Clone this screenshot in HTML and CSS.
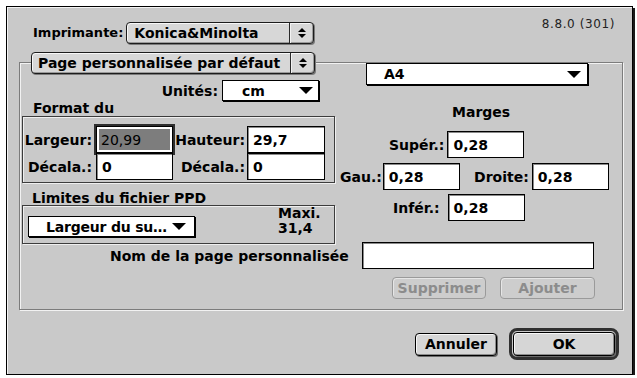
FILE: index.html
```html
<!DOCTYPE html>
<html lang="fr">
<head>
<meta charset="utf-8">
<title>Format d'impression</title>
<link rel="stylesheet" href="styles.css">
</head>
<body>
<div class="window">
  <div class="header">
    <div class="printer">
      <span class="printer-label">Imprimante:</span>
      <div class="popup popup-printer">
        <span class="popup-text">Konica&amp;Minolta</span>
        <span class="popup-arrows"><i class="up"></i><i class="down"></i></span>
      </div>
    </div>
    <div class="version">8.8.0 (301)</div>
  </div>

  <div class="group">
    <div class="group-grid">
      <div class="col-left">
        <div class="popup popup-title">
          <span class="popup-text">Page personnalisée par défaut</span>
          <span class="popup-arrows"><i class="up"></i><i class="down"></i></span>
        </div>
        <div class="units-row">
          <span class="lbl">Unités:</span>
          <div class="menu menu-units"><span class="menu-text">cm</span><i class="tri"></i></div>
        </div>
        <div class="section-label format-label">Format du</div>
        <div class="box format-box">
          <div class="dims">
            <span class="dlbl">Largeur:</span>
            <div class="field focus"><span class="sel">20,99</span></div>
            <span class="dlbl dlbl2">Hauteur:</span>
            <div class="field">29,7</div>
            <span class="dlbl">Décala.:</span>
            <div class="field">0</div>
            <span class="dlbl dlbl2">Décala.:</span>
            <div class="field">0</div>
          </div>
        </div>
        <div class="section-label limits-label">Limites du fichier PPD</div>
        <div class="box limits-box">
          <div class="menu menu-limit"><span class="menu-text">Largeur du su…</span><i class="tri"></i></div>
          <div class="maxi">Maxi.<br>31,4</div>
        </div>
      </div>

      <div class="col-right">
        <div class="menu menu-a4"><span class="menu-text">A4</span><i class="tri"></i></div>
        <div class="marges">Marges</div>
        <div class="mrow mrow-top">
          <span class="lbl">Supér.:</span>
          <div class="field">0,28</div>
        </div>
        <div class="mrow mrow-mid">
          <span class="lbl">Gau.:</span>
          <div class="field">0,28</div>
          <span class="lbl lbl-droite">Droite:</span>
          <div class="field">0,28</div>
        </div>
        <div class="mrow mrow-bot">
          <span class="lbl">Infér.:</span>
          <div class="field">0,28</div>
        </div>
      </div>
    </div>

    <div class="name-row">
      <span class="lbl">Nom de la page personnalisée</span>
      <div class="field field-name"></div>
    </div>
    <div class="btn-row">
      <div class="btn-disabled btn-supp">Supprimer</div>
      <div class="btn-disabled btn-add">Ajouter</div>
    </div>
  </div>

  <div class="footer">
    <div class="btn btn-cancel">Annuler</div>
    <div class="default-ring"><div class="btn btn-ok">OK</div></div>
  </div>
</div>
</body>
</html>
```

FILE: styles.css
```css
* { box-sizing: border-box; }

html, body {
  margin: 0;
  padding: 0;
  background: #ffffff;
}

body {
  font-family: "DejaVu Sans", "Verdana", sans-serif;
  font-weight: bold;
  font-size: 14px;
  line-height: 16px;
  color: #000;
}

.window {
  box-sizing: content-box;
  margin: 6px 0 0 6px;
  width: 625px;
  height: 367px;
  border: 1px solid #000;
  background: #c9c9c9;
  box-shadow: inset 1px 1px 0 #f4f4f4, 2px 2px 0 #1a1a1a;
  display: flex;
  flex-direction: column;
}

/* header */
.header {
  height: 38px;
  display: flex;
  justify-content: space-between;
  align-items: flex-start;
  padding: 0 17px 0 26px;
}

.printer {
  margin-top: 15px;
  display: flex;
  align-items: center;
  gap: 3px;
}

.printer-label {
  font-size: 13px;
}

.version {
  margin-top: 10px;
  font-weight: normal;
  font-size: 12px;
  line-height: 14px;
  letter-spacing: 0.6px;
  color: #222;
}

/* platinum popup */
.popup {
  height: 22px;
  display: flex;
  align-items: stretch;
  border: 1px solid #1c1c1c;
  border-radius: 4px;
  background: #d7d7d7;
  box-shadow: inset 1px 1px 0 #f7f7f7, inset -1px -1px 0 #9a9a9a, 1px 1px 0 #7a7a7a;
}

.popup-text {
  flex: 1;
  display: flex;
  align-items: center;
  padding-left: 7px;
  white-space: nowrap;
}

.popup-arrows {
  width: 24px;
  border-left: 1px solid #2a2a2a;
  box-shadow: inset 1px 0 0 #f2f2f2;
  display: flex;
  flex-direction: column;
  align-items: center;
  justify-content: center;
  gap: 2px;
}

.popup-arrows .up {
  width: 0;
  height: 0;
  border-left: 4px solid transparent;
  border-right: 4px solid transparent;
  border-bottom: 4px solid #000;
}

.popup-arrows .down {
  width: 0;
  height: 0;
  border-left: 4px solid transparent;
  border-right: 4px solid transparent;
  border-top: 4px solid #000;
}

.popup-printer { width: 188px; }
.popup-printer .popup-text { padding-left: 7px; }

/* group */
.group {
  margin: 17px 0 0 12px;
  width: 604px;
  height: 248px;
  border: 1px solid #7c7c7c;
  box-shadow: inset 1px 1px 0 #f2f2f2, 1px 1px 0 #f2f2f2;
}

.group-grid {
  display: grid;
  grid-template-columns: 316px 1fr;
}

.col-left, .col-right {
  display: flex;
  flex-direction: column;
  align-items: flex-start;
}

.popup-title {
  margin: -11px 0 0 11px;
  width: 284px;
}
.popup-title .popup-text { padding-left: 6px; }

/* white menus */
.menu {
  height: 21px;
  display: flex;
  align-items: center;
  justify-content: space-between;
  border: 1px solid #000;
  background: #fff;
  box-shadow: 1px 1px 0 #000;
}

.menu-text { white-space: nowrap; }

.tri {
  width: 0;
  height: 0;
  border-left: 7px solid transparent;
  border-right: 7px solid transparent;
  border-top: 7px solid #000;
}

.units-row {
  align-self: stretch;
  margin-top: 6px;
  display: flex;
  justify-content: flex-end;
  align-items: center;
  gap: 4px;
  padding-right: 17px;
}

.menu-units {
  width: 97px;
  padding: 0 5px 0 19px;
}

.section-label { line-height: 16px; }

.format-label { margin: -1px 0 0 13px; }

.box {
  margin-left: 2px;
  width: 313px;
  border: 1px solid #3c3c3c;
  box-shadow: inset 1px 1px 0 #efefef, 1px 1px 0 #efefef;
}

.format-box {
  height: 67px;
  padding-top: 9px;
}

.dims {
  display: grid;
  grid-template-columns: 73px 77px 74px 78px;
  grid-auto-rows: 27px;
}

.dlbl {
  align-self: center;
  text-align: right;
  padding-right: 4px;
  white-space: nowrap;
}

.dlbl2 { padding-right: 2px; }

/* edit fields */
.field {
  height: 27px;
  width: 77px;
  border: 1px solid #000;
  background: #fff;
  box-shadow: inset 1px 1px 0 #8a8a8a;
  display: flex;
  align-items: center;
  padding-left: 5px;
  white-space: nowrap;
}

.dims .field { width: auto; }

.field.focus {
  padding: 2px;
  box-shadow: 0 0 0 2px #2e2e2e;
  align-items: stretch;
}

.sel {
  flex: 1;
  background: #7d7d7d;
  display: flex;
  align-items: center;
  padding-left: 2px;
  font-weight: normal;
  color: #000;
}

.limits-label { margin: 7px 0 0 12px; }

.limits-box {
  margin-top: -1px;
  height: 39px;
  display: flex;
  align-items: flex-start;
  padding-left: 5px;
}

.menu-limit {
  margin-top: 10px;
  width: 167px;
  padding: 0 8px 0 17px;
}

.menu-limit .menu-text { letter-spacing: -0.2px; }

.maxi {
  margin-left: 83px;
  line-height: 15px;
}

/* right column */
.menu-a4 {
  margin-left: 30px;
  width: 222px;
  height: 22px;
  padding: 0 6px 0 17px;
}

.marges { margin: 19px 0 0 116px; }

.mrow {
  display: flex;
  align-items: center;
}

.mrow .lbl { white-space: nowrap; }

.mrow-top { margin-top: 11px; padding-left: 53px; gap: 3px; }
.mrow-mid { margin-top: 5px; padding-left: 4px; gap: 1px; }
.mrow-mid .lbl-droite { width: 68px; text-align: right; margin-right: 2px; }
.mrow-bot { margin-top: 4px; padding-left: 57px; gap: 8px; }

/* name row */
.name-row {
  margin-top: -2px;
  display: flex;
  align-items: center;
  padding-left: 90px;
  gap: 13px;
}

.field-name { width: 232px; }

.btn-row {
  margin-top: 8px;
  padding-left: 372px;
  display: flex;
  gap: 14px;
}

.btn-disabled {
  height: 22px;
  border: 1px solid #9a9a9a;
  border-radius: 4px;
  background: #cdcdcd;
  box-shadow: inset 1px 1px 0 #e6e6e6;
  color: #8c8c8c;
  display: flex;
  align-items: center;
  justify-content: center;
}

.btn-supp { width: 94px; }
.btn-add { width: 95px; }

/* footer */
.footer {
  margin-top: 18px;
  display: flex;
  justify-content: flex-end;
  align-items: center;
  gap: 12px;
  padding-right: 13px;
}

.btn {
  height: 23px;
  border: 1px solid #000;
  border-radius: 4px;
  background: #d6d6d6;
  box-shadow: inset 1px 1px 0 #f7f7f7, inset -1px -1px 0 #8c8c8c, 1px 1px 0 #6a6a6a;
  display: flex;
  align-items: center;
  justify-content: center;
}

.btn-cancel { width: 82px; }

.default-ring {
  width: 110px;
  height: 32px;
  border: 3px solid #303030;
  border-radius: 8px;
  padding: 1px;
  background: #c9c9c9;
  display: flex;
}

.btn-ok { flex: 1; height: 100%; }
```
